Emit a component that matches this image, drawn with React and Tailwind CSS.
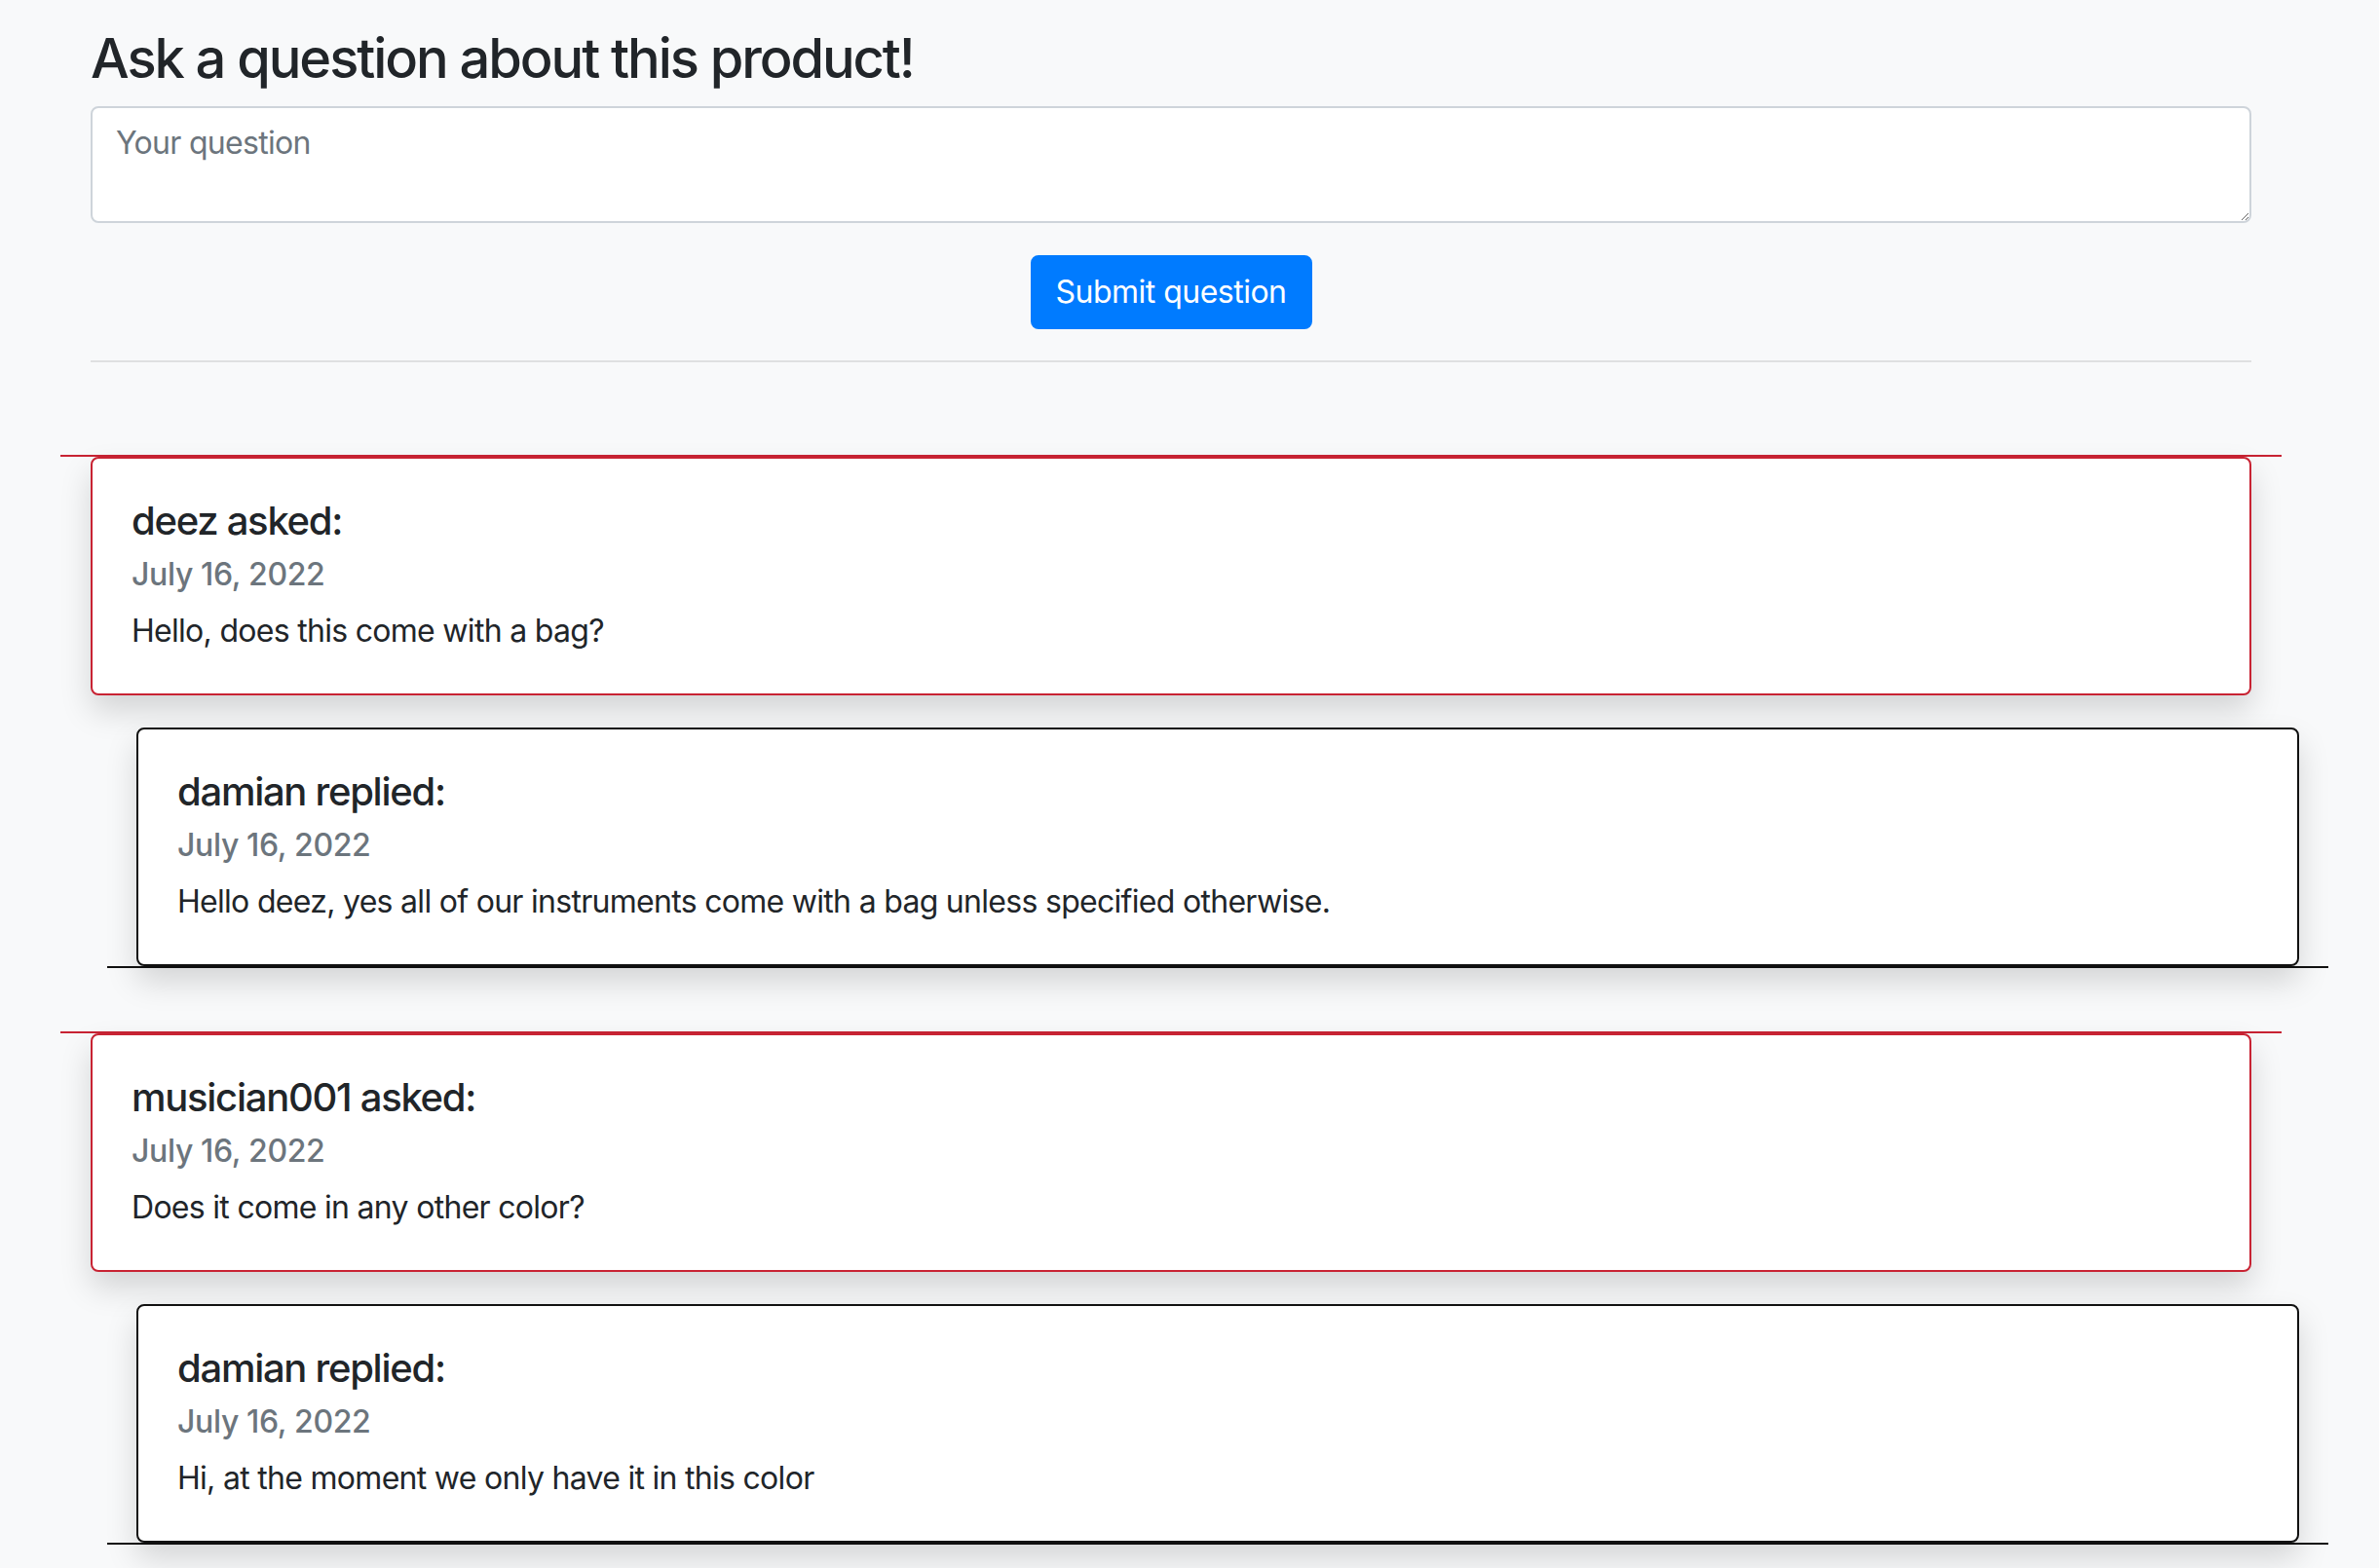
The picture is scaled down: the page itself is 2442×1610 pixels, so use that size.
const threads = [
  {
    id: 1,
    user: "deez",
    date: "July 16, 2022",
    text: "Hello, does this come with a bag?",
    reply: {
      user: "damian",
      date: "July 16, 2022",
      text: "Hello deez, yes all of our instruments come with a bag unless specified otherwise.",
    },
  },
  {
    id: 2,
    user: "musician001",
    date: "July 16, 2022",
    text: "Does it come in any other color?",
    reply: {
      user: "damian",
      date: "July 16, 2022",
      text: "Hi, at the moment we only have it in this color",
    },
  },
];

function CardBody({ title, date, text }) {
  return (
    <div className="px-[40px] py-[40px]">
      <h5 className="text-[40px] leading-[48px] font-medium tracking-[-0.032em] text-[#212529] mb-[24px]">
        {title}
      </h5>
      <h6 className="text-[32px] leading-[38px] font-medium tracking-[-0.011em] text-[#6c757d] -mt-[12px]">
        {date}
      </h6>
      <p className="text-[32px] leading-[48px] tracking-[-0.022em] text-[#212529] mt-[15px]">
        {text}
      </p>
    </div>
  );
}

export default function App() {
  return (
    <main
      className="min-h-screen bg-[#f8f9fa] pb-[40px]"
      style={{ fontFamily: "Inter, 'Noto Sans', sans-serif" }}
    >
      {/* Formulario */}
      <div className="ml-[93px] w-[2218px] pt-[27px]">
        <h3 className="text-[56px] leading-[67px] font-medium tracking-[-0.037em] text-[#212529] mb-[15px]">
          Ask a question about this product!
        </h3>
        <textarea
          rows={2}
          placeholder="Your question"
          className="block w-full h-[120px] bg-white border-2 border-[#ced4da] rounded-[8px] px-[24px] py-[12px] text-[32px] leading-[48px] tracking-[-0.022em] text-[#495057] placeholder:text-[#6c757d] outline-none"
        />
        <div className="flex justify-center mt-[33px]">
          <button className="bg-[#007bff] text-white text-[32px] leading-[48px] tracking-[-0.016em] px-[24px] py-[12px] border-2 border-[#007bff] rounded-[8px]">
            Submit question
          </button>
        </div>
        <div className="h-[2px] bg-[#dfe0e1] mt-[32px]"></div>
      </div>

      {/* Perguntas */}
      <div className="ml-[62px] w-[2280px] mt-[95px]">
        {threads.map((t) => (
          <div key={t.id} className="mb-[65px]">
            <div className="h-[2px] bg-[#c82333]"></div>
            <div className="mx-[31px] bg-white border-2 border-[#c82333] rounded-[8px] shadow-[0_16px_32px_rgba(0,0,0,0.15)]">
              <CardBody title={`${t.user} asked:`} date={t.date} text={t.text} />
            </div>
            <div className="ml-[48px] w-[2280px] mt-[33px] border-b-2 border-[#111111]">
              <div className="mx-[30px] bg-white border-2 border-[#111111] rounded-[8px] shadow-[0_16px_32px_rgba(0,0,0,0.15)]">
                <CardBody
                  title={`${t.reply.user} replied:`}
                  date={t.reply.date}
                  text={t.reply.text}
                />
              </div>
            </div>
          </div>
        ))}
      </div>
    </main>
  );
}
